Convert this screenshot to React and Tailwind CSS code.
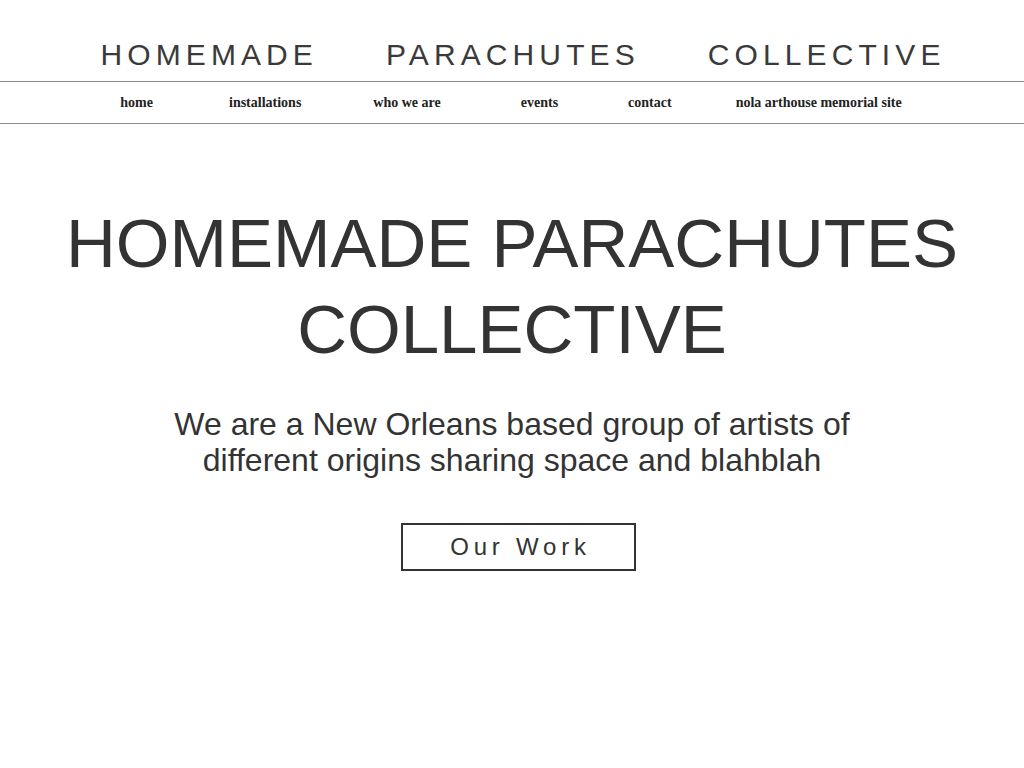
export default function App() {
  const nav = [
    ["home", ""],
    ["installations", "ml-[76px]"],
    ["who we are", "ml-[72px]"],
    ["events", "ml-[80px]"],
    ["contact", "ml-[70px]"],
    ["nola arthouse memorial site", "ml-[64px]"],
  ];
  return (
    <div className="min-h-[768px] bg-white text-[#333]" style={{ fontFamily: "'Liberation Sans', Arial, sans-serif" }}>
      <header>
        <div className="flex h-[81px] items-center justify-center gap-[68px] pl-[22px] pt-[28px] text-[30px] leading-none tracking-[0.17em] text-[#3a3a3a]">
          <span>HOMEMADE</span>
          <span>PARACHUTES</span>
          <span>COLLECTIVE</span>
        </div>
        <nav className="flex h-[43px] items-center justify-center border-y border-[#8a8a8a] pr-[2px] text-[14px] font-bold text-[#222]" style={{ fontFamily: "'Liberation Serif', 'Times New Roman', serif" }}>
          {nav.map(([n, c]) => (
            <a key={n} href="#" className={"leading-none " + c}>{n}</a>
          ))}
        </nav>
      </header>
      <main className="flex flex-col items-center pt-[77px] text-center">
        <h1 className="text-[69px] font-normal leading-[86px] text-[#333]">
          HOMEMADE PARACHUTES
          <br />
          COLLECTIVE
        </h1>
        <p className="mt-[33px] text-[32px] leading-[36px] text-[#333]">
          We are a New Orleans based group of artists of
          <br />
          different origins sharing space and blahblah
        </p>
        <a href="#" className="ml-[12px] mt-[45px] flex h-[48px] w-[235px] items-center justify-center border-2 border-[#333] pl-[5px] text-[24px] tracking-[0.2em] text-[#333]">
          Our Work
        </a>
      </main>
    </div>
  );
}
